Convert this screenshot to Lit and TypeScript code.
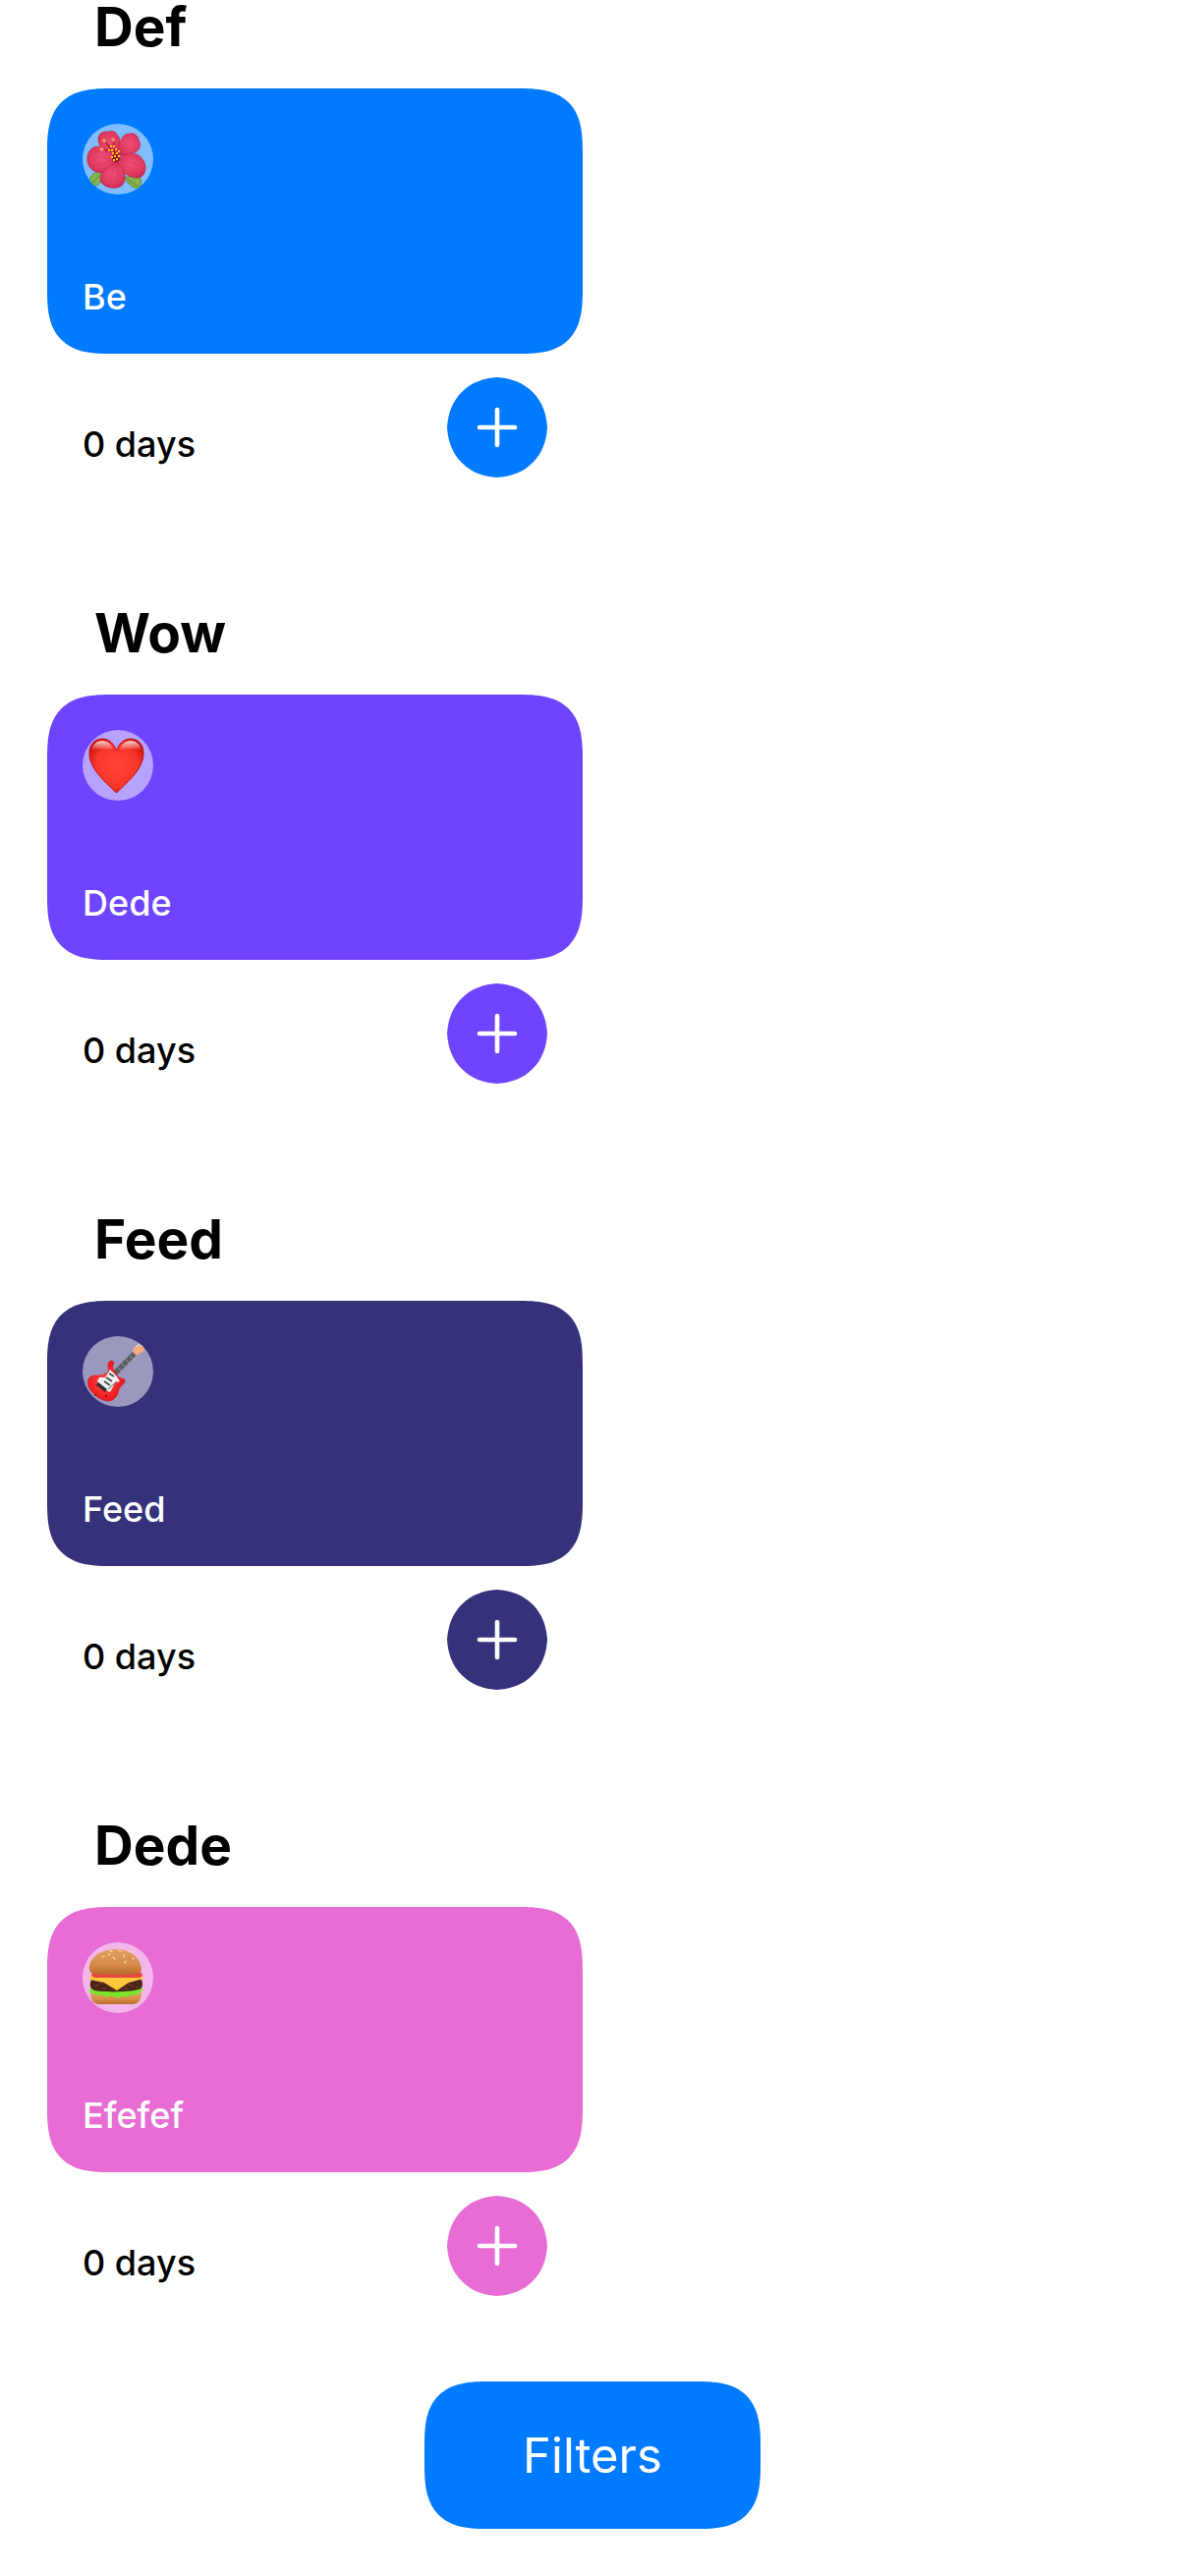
import { LitElement, html, css, svg } from "lit";
import { customElement } from "lit/decorators.js";

const flower = svg`
  <defs>
    <radialGradient id="petal" cx=".5" cy=".45" r=".65">
      <stop offset="0" stop-color="#ee5079"/><stop offset=".6" stop-color="#e03a60"/><stop offset="1" stop-color="#c32549"/>
    </radialGradient>
    <radialGradient id="bead"><stop offset="0" stop-color="#ffb09c"/><stop offset="1" stop-color="#dc3040"/></radialGradient>
  </defs>
  <g fill="#86b150" stroke="#55852f" stroke-width=".8">
    <path d="M19 48C12 48 5 55 7 62C13 66 20 62 19 52Z"/>
    <path d="M43 55C50 52 60 54 60 58L58 66C51 65 46 62 43 55Z"/>
    <path d="M19 51L9 61M45 56L57 64" fill="none"/>
  </g>
  <g fill="url(#petal)" stroke="#b92447" stroke-width=".4">
    <path d="M35 34C27 32 16 26 16 17C15 11 20 7 26 8C30 6 35 9 35 11C40 14 38 26 35 34Z"/>
    <path d="M36 33C36 23 39 10 47 10C53 8 57 13 57 16C61 21 58 29 51 30C46 32 41 33 36 33Z"/>
    <path d="M34 38C42 29 56 27 61 36C67 43 64 54 57 55C47 56 38 48 34 38Z"/>
    <path d="M34 37C32 30 23 24 14 23C5 25 3 35 6 42C9 50 21 52 27 48C31 45 34 42 34 37Z"/>
    <path d="M35 39C28 43 17 49 18 57C20 66 36 68 41 62C46 55 43 44 35 39Z"/>
  </g>
  <g fill="none" stroke="#b51f42" stroke-width=".5" opacity=".4">
    <path d="M35 36Q31 48 27 62M35 36Q36 50 36 62M36 36Q48 39 58 43M36 36Q46 43 55 51M32 36Q20 33 10 35M32 37Q20 40 12 43M34 31Q30 19 28 13M38 29Q45 20 50 14"/>
  </g>
  <ellipse cx="34" cy="35" rx="4" ry="4" fill="#8c1230"/>
  <path d="M34 33L22 16M34 33L31 16M30 28L20 26" stroke="#b41b3c" stroke-width="1.5" fill="none"/>
  <g fill="url(#bead)"><circle cx="22" cy="17" r="3.2"/><circle cx="31" cy="16" r="3.2"/><circle cx="19.5" cy="26" r="3.2"/></g>
  <path d="M28 23h2M31 23h2M26 27h2M29 27h2M33 26h2M30 30h2M34 30h2M32 33h2M36 28h2M36 33h2M29 34h2M34 36h2M31 37h2" stroke="#ffd400" stroke-width="1.8"/>
`;

const heart = svg`
  <defs>
    <radialGradient id="heart" cx=".5" cy=".5" r=".6">
      <stop offset="0" stop-color="#ff4336"/><stop offset=".65" stop-color="#f8362c"/><stop offset="1" stop-color="#c50d08"/>
    </radialGradient>
    <linearGradient id="gloss" x2="0" y2="1"><stop offset="0" stop-color="#fff" stop-opacity=".8"/><stop offset="1" stop-color="#fff" stop-opacity="0"/></linearGradient>
  </defs>
  <path d="M34.5 64C27 56 7 41 7 24C7 14 13 9 20 9C27 9 32 14 34.5 21C37 14 42 9 49 9C56 9 62 14 62 24C62 41 42 56 34.5 64Z" fill="url(#heart)" stroke="#c61009" stroke-width="1"/>
  <path d="M9 21C10 14 15 11 20 11C26 11 30 15 31 21C27 18 14 18 9 21Z" fill="url(#gloss)"/>
  <path d="M38 21C39 15 43 11 49 11C54 11 59 14 60 21C55 18 42 18 38 21Z" fill="url(#gloss)"/>
`;

const guitar = svg`
  <defs>
    <radialGradient id="body" cx=".45" cy=".5" r=".6"><stop offset="0" stop-color="#ff4a48"/><stop offset=".75" stop-color="#ee1c20"/><stop offset="1" stop-color="#d21218"/></radialGradient>
  </defs>
  <path d="M30 37L51 16L55 19L34 41Z" fill="#5b5b62"/>
  <path d="M36 32l4 4M40 28l4 4M44 24l4 4M48 20l4 4" stroke="#a9a9ad" stroke-width=".8"/>
  <path d="M51 16C51 10 57 9 62 7L63 14C59 18 56 20 54 19Z" fill="#f3ae7e"/>
  <path d="M54 11L59 7M57 9L62 10" stroke="#d8cfc8" stroke-width="1.5"/>
  <path d="M26 36C27 32 24 27 29 25C32 25 33 28 31 29C30 32 32 36 35 40C37 43 41 43 43 44C44 48 39 50 37 54C36 60 33 66 26 66C19 66 9 59 6 51C4 45 7 40 13 40C18 40 23 40 26 36Z" fill="url(#body)" stroke="#d8181c" stroke-width=".6"/>
  <path d="M28 34L34 40L38 46L33 48L28 57L22 54L15 46L17 42L23 42Z" fill="#f1f1f1"/>
  <path d="M24 42l6 4M22 46l6 4M27 38l5 3" stroke="#44444a" stroke-width="1.6"/>
  <path d="M16 47L25 54L23 57L14 50Z" fill="#303036"/>
  <path d="M26 54L35 46" stroke="#333" stroke-width=".8"/>
  <circle cx="24" cy="61" r="1.2" fill="#721"/><circle cx="13" cy="60" r="1" fill="#721"/>
`;

const burger = svg`
  <defs>
    <linearGradient id="bun" x2="0" y2="1"><stop offset="0" stop-color="#e3a062"/><stop offset=".6" stop-color="#d68c48"/><stop offset="1" stop-color="#b96b2b"/></linearGradient>
  </defs>
  <path d="M8 51H60C60 60 56 63 50 63H18C12 63 8 60 8 51Z" fill="url(#bun)"/>
  <path d="M7 47C10 45 57 45 60 45C63 48 60 50 58 51C56 56 52 52 48 54C45 58 42 53 38 56C34 58 31 53 27 55C23 58 20 52 17 54C14 55 12 52 10 52C6 52 8 49 7 47Z" fill="#7be52c"/>
  <path d="M9 38H60C62 43 61 47 57 48C48 51 20 51 12 49C7 47 7 42 9 38Z" fill="#4b251a"/>
  <path d="M13 44h3M20 47h4M27 45h3M42 47h4M49 44h3M54 46h2M17 42h2M46 43h2" stroke="#733c29" stroke-width="1.5"/>
  <path d="M8 34H61L62 37L47 41L35 49L22 41L7 38Z" fill="#ffc83c"/>
  <path d="M10 31H60C62 34 60 36 56 36H15C10 36 8 34 10 31Z" fill="#e84640"/>
  <path d="M7 28C6 16 18 7 34 7C50 7 60 17 60 28C60 32 53 33 34 33C14 33 7 32 7 28Z" fill="url(#bun)"/>
  <path d="M20 15l2-1M28 9l2 0M33 17l-2-2M42 13l0 2M37 8l2 1M47 9l2 1M43 21l1-2M51 16l1 1M26 13l2-1" stroke="#f8d8a0" stroke-width="1.3" stroke-linecap="round"/>
`;

interface Entry {
  group: string;
  name: string;
  color: string;
  days: number;
  art: unknown;
  label: string;
}

const entries: Entry[] = [
  { group: "Def", name: "Be", color: "#007aff", days: 0, art: flower, label: "Hibiscus" },
  { group: "Wow", name: "Dede", color: "#6e44ff", days: 0, art: heart, label: "Heart" },
  { group: "Feed", name: "Feed", color: "#35327b", days: 0, art: guitar, label: "Guitar" },
  { group: "Dede", name: "Efefef", color: "#e76dd5", days: 0, art: burger, label: "Burger" },
];

@customElement("app-root")
export class AppRoot extends LitElement {
  static styles = css`
    :host {
      display: block;
      min-height: 100vh;
      background: #fff;
      color: #000;
      font-family: Inter, "Liberation Sans", sans-serif;
    }
    main { display: flex; flex-direction: column; }
    .group {
      display: grid;
      grid-template-columns: repeat(2, minmax(0, 1fr));
      column-gap: 20px;
      padding: 0 48px;
      margin-bottom: 131px;
    }
    .group:last-of-type { margin-bottom: 87px; }
    .title {
      grid-column: 1 / -1;
      margin: 0;
      padding: 0 48px 36px;
      font-size: 55px;
      line-height: 54px;
      font-weight: 700;
    }
    .card {
      box-sizing: border-box;
      display: flex;
      flex-direction: column;
      justify-content: space-between;
      height: 270px;
      padding: 36px;
      color: #fff;
      background: var(--tint);
      border-radius: 66px;
      corner-shape: superellipse(1.5);
    }
    .badge { display: block; width: 72px; height: 72px; border-radius: 50%; background: rgb(255 255 255 / 50%); }
    .name { margin: 0; font-size: 36px; line-height: 44px; font-weight: 500; }
    .foot { display: flex; justify-content: space-between; align-items: center; padding: 24px 36px 0; }
    .days { margin: 0; padding-top: 34px; font-size: 36px; line-height: 42px; font-weight: 500; }
    button { border: 0; padding: 0; font: inherit; color: #fff; cursor: pointer; }
    .add { width: 102px; height: 102px; background: none; }
    .add svg { display: block; width: 102px; height: 102px; }
    .filters {
      align-self: center;
      height: 150px;
      padding: 2px 100px 0;
      margin-bottom: 48px;
      font-size: 49px;
      line-height: 60px;
      background: #007aff;
      border-radius: 66px;
      corner-shape: superellipse(1.5);
    }
  `;

  render() {
    return html`<main>
      ${entries.map((e) => html`
        <section class="group" style="--tint:${e.color}">
          <h2 class="title">${e.group}</h2>
          <div>
            <article class="card">
              <svg class="badge" viewBox="0 0 72 72" role="img" aria-label=${e.label}>${e.art}</svg>
              <p class="name">${e.name}</p>
            </article>
            <div class="foot">
              <p class="days">${e.days} days</p>
              <button class="add" aria-label="Add to ${e.name}">
                <svg viewBox="0 0 102 102" aria-hidden="true">
                  <path d="M51 0C65 1 77 5 87 15C97 25 101 37 102 51C101 65 97 77 87 87C77 97 65 101 51 102C37 101 25 97 15 87C5 77 1 65 0 51C1 37 5 25 15 15C25 5 37 1 51 0Z" fill=${e.color} />
                  <path d="M51 33V69M33 51H69" stroke="#fff" stroke-width="4.6" stroke-linecap="round" />
                </svg>
              </button>
            </div>
          </div>
        </section>`)}
      <button class="filters">Filters</button>
    </main>`;
  }
}
